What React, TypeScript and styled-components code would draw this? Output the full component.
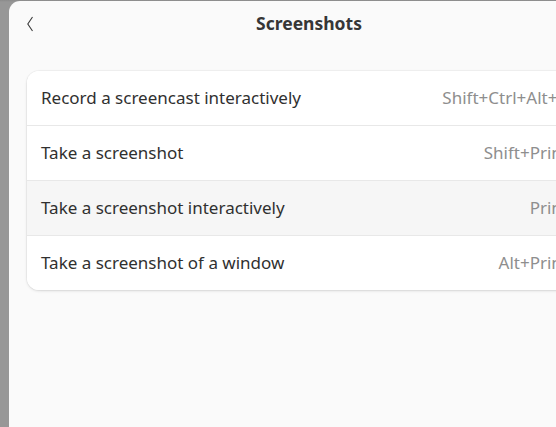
import React from "react";
import styled, { createGlobalStyle } from "styled-components";

const Global = createGlobalStyle`
  html, body { margin: 0; padding: 0; overflow: hidden; }
  body { width: 556px; height: 427px; background: #979797; font-family: "Noto Sans", "Open Sans", sans-serif; }
`;

const Desktop = styled.div`
  width: 556px;
  height: 427px;
  overflow: hidden;
  background: linear-gradient(#8a8a8a 0, #979797 2px);
  padding: 1px 0 0 9px;
  box-sizing: border-box;
`;

const Dialog = styled.div`
  width: 600px;
  height: 460px;
  background: #fafafa;
  border-radius: 11px 11px 0 0;
  display: flex;
  flex-direction: column;
`;

const HeaderBar = styled.div`
  height: 45px;
  display: grid;
  grid-template-columns: 44px 1fr 44px;
  align-items: center;
`;

const BackButton = styled.div`
  display: flex;
  align-items: center;
  justify-content: center;
  height: 45px;
`;

const Title = styled.div`
  text-align: center;
  font-weight: 700;
  font-size: 17.5px;
  color: #363636;
  padding-bottom: 1px;
`;

const Content = styled.div`
  padding: 25px 18px 0 18px;
`;

const ListBox = styled.div`
  background: #ffffff;
  border-radius: 12px;
  box-shadow: 0 0 0 1px rgba(0,0,0,0.03), 0 1px 3px rgba(0,0,0,0.12);
  overflow: hidden;
`;

const Row = styled.div<{ $hover?: boolean; $last?: boolean }>`
  height: 54px;
  box-sizing: content-box;
  display: flex;
  align-items: center;
  justify-content: space-between;
  padding: 0 23px 0 14px;
  background: ${(p) => (p.$hover ? "#f6f6f6" : "#ffffff")};
  border-bottom: ${(p) => (p.$last ? "none" : "1px solid #e8e8e8")};
  font-size: 17px;
`;

const RowText = styled.span`
  display: block;
  margin-bottom: 2px;
`;

const Label = styled(RowText)`
  color: #303030;
`;

const Accel = styled(RowText)`
  color: #8e8e8e;
`;

const rows = [
  { label: "Record a screencast interactively", accel: "Shift+Ctrl+Alt+R" },
  { label: "Take a screenshot", accel: "Shift+Print" },
  { label: "Take a screenshot interactively", accel: "Print", hover: true },
  { label: "Take a screenshot of a window", accel: "Alt+Print" },
];

export default function App() {
  return (
    <Desktop>
      <Global />
      <Dialog>
        <HeaderBar>
          <BackButton>
            <svg width="8" height="16" viewBox="0 0 8 16">
              <path d="M5.5 1 L0.8 8 L5.5 15" fill="none" stroke="#3a3a3a" strokeWidth="1.1" />
            </svg>
          </BackButton>
          <Title>Screenshots</Title>
          <div />
        </HeaderBar>
        <Content>
          <ListBox>
            {rows.map((r, i) => (
              <Row key={r.label} $hover={r.hover} $last={i === rows.length - 1}>
                <Label>{r.label}</Label>
                <Accel>{r.accel}</Accel>
              </Row>
            ))}
          </ListBox>
        </Content>
      </Dialog>
    </Desktop>
  );
}
